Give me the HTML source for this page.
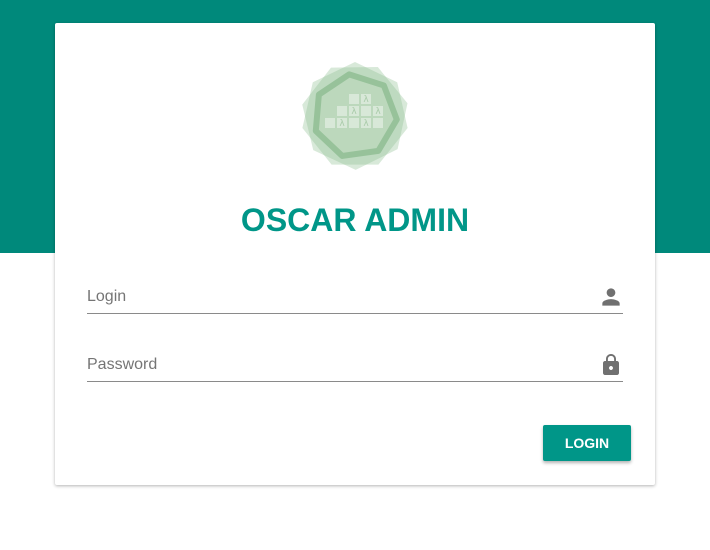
<!DOCTYPE html>
<html><head><style>
body{margin:0;width:710px;height:550px;background:#fff;font-family:"Liberation Sans",sans-serif;position:relative;overflow:hidden}
.top{position:absolute;left:0;top:0;width:710px;height:253px;background:#00897b}
.card{position:absolute;left:55px;top:23px;width:600px;height:462px;background:#fff;border-radius:2px;box-shadow:0 1px 3px rgba(0,0,0,.3)}
.title{position:absolute;left:0;width:600px;top:179px;text-align:center;font-size:32px;font-weight:bold;color:#009688}
.field{position:absolute;left:32px;width:536px;height:1px;background:#8a8a8a}
.lbl{position:absolute;left:32px;font-size:16px;color:#757575}
.btn{position:absolute;left:488px;top:402px;width:88px;height:36px;background:#009688;color:#fff;font-size:14px;font-weight:bold;text-align:center;line-height:36px;border-radius:2px;box-shadow:0 2px 3px rgba(0,0,0,.3)}
</style></head><body>
<div class="top"></div>
<div class="card">
<svg style="position:absolute;left:245px;top:37px" width="110" height="112" viewBox="-55 -56 110 112">
<g fill="#8fbf92" fill-opacity="0.35">
<polygon points="0,-54 42.2,-33.7 52.6,12 23.4,48.6 -23.4,48.6 -52.6,12 -42.2,-33.7"/>
<polygon transform="rotate(25)" points="0,-54 42.2,-33.7 52.6,12 23.4,48.6 -23.4,48.6 -52.6,12 -42.2,-33.7"/>
</g>
<polygon transform="rotate(-8)" points="0,-42 32.8,-26.2 40.9,9.3 18.2,37.8 -18.2,37.8 -40.9,9.3 -32.8,-26.2" fill="#bcd8bc" stroke="#97c29a" stroke-width="6" stroke-linejoin="round"/>
<g fill="#d8e8d8">
<rect x="-6" y="-22" width="10" height="10"/><rect x="6" y="-22" width="10" height="10"/>
<rect x="-18" y="-10" width="10" height="10"/><rect x="-6" y="-10" width="10" height="10"/><rect x="6" y="-10" width="10" height="10"/><rect x="18" y="-10" width="10" height="10"/>
<rect x="-30" y="2" width="10" height="10"/><rect x="-18" y="2" width="10" height="10"/><rect x="-6" y="2" width="10" height="10"/><rect x="6" y="2" width="10" height="10"/><rect x="18" y="2" width="10" height="10"/>
</g>
<g fill="#a9cba9" font-size="9" font-family="DejaVu Sans" text-anchor="middle">
<text x="11" y="-14">λ</text><text x="-1" y="-2">λ</text><text x="23" y="-2">λ</text><text x="-13" y="10">λ</text><text x="11" y="10">λ</text>
</g>
</svg>
<div class="title">OSCAR ADMIN</div>
<div class="lbl" style="top:265px">Login</div>
<div class="field" style="top:290px"></div>
<svg style="position:absolute;left:543px;top:261px" width="26" height="26" viewBox="0 0 24 24"><path fill="#707070" d="M12 12c2.2 0 4-1.8 4-4s-1.8-4-4-4-4 1.8-4 4 1.8 4 4 4zm0 2c-2.7 0-8 1.3-8 4v2h16v-2c0-2.7-5.3-4-8-4z"/></svg>
<div class="lbl" style="top:333px">Password</div>
<div class="field" style="top:358px"></div>
<svg style="position:absolute;left:544px;top:330px" width="24" height="24" viewBox="0 0 24 24"><path fill="#707070" d="M18 8h-1V6c0-2.8-2.2-5-5-5S7 3.2 7 6v2H6c-1.1 0-2 .9-2 2v10c0 1.1.9 2 2 2h12c1.1 0 2-.9 2-2V10c0-1.1-.9-2-2-2zm-6 9c-1.1 0-2-.9-2-2s.9-2 2-2 2 .9 2 2-.9 2-2 2zm3.1-9H8.9V6c0-1.700 1.4-3.1 3.1-3.1s3.1 1.4 3.1 3.1v2z"/></svg>
<div class="btn">LOGIN</div>
</div>
</body></html>
